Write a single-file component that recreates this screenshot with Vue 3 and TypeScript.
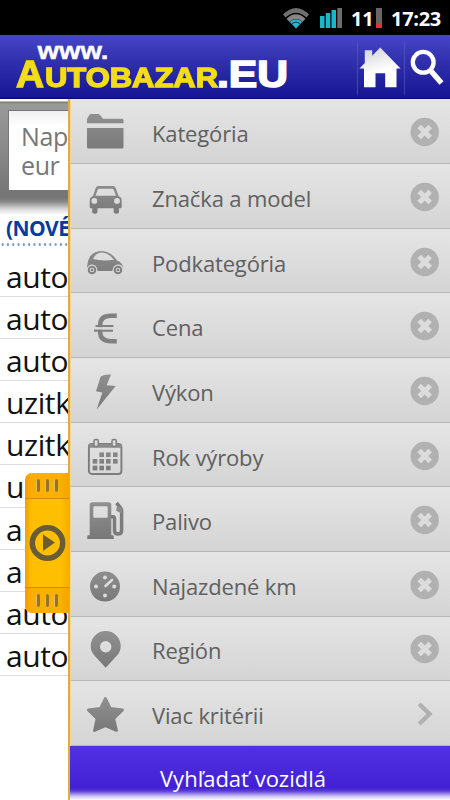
<script setup lang="ts">
interface Criterion {
  label: string
  icon: string
}

const criteria: Criterion[] = [
  { label: 'Kategória', icon: 'folder' },
  { label: 'Značka a model', icon: 'car' },
  { label: 'Podkategória', icon: 'compact' },
  { label: 'Cena', icon: 'euro' },
  { label: 'Výkon', icon: 'bolt' },
  { label: 'Rok výroby', icon: 'calendar' },
  { label: 'Palivo', icon: 'fuel' },
  { label: 'Najazdené km', icon: 'gauge' },
  { label: 'Región', icon: 'pin' },
  { label: 'Viac kritérii', icon: 'star' },
]

const categories: string[] = [
  'auto', 'auto', 'auto', 'uzitk', 'uzitk', 'u', 'a', 'a', 'auto', 'auto',
]

const days: number[][] = [
  [15.7, 18.7], [22.3, 18.7], [29.3, 18.7],
  [9, 25.3], [15.7, 25.3], [22.3, 25.3], [29.3, 25.3],
  [9, 32], [15.7, 32], [22.3, 32],
]
</script>

<template>
  <div class="screen">
    <div class="status">
      <svg class="wifi" width="28" height="24" viewBox="0 0 28 24">
        <path d="M1 8.500Q14-4.500 27 8.500L24.500 11.500Q14 2 3.500 11.500Z" fill="#6f6f6f" />
        <path d="M4.500 12.700Q14 4 23.500 12.700L20.500 16Q14 10 7.500 16Z" fill="#858585" />
        <path d="M7.800 16Q14 10.500 20.200 16L14 22.500Z" fill="#27b8cf" />
        <path d="M10 17.800Q14 14.500 18 17.800" fill="none" stroke="#0b4f5a" stroke-width="1.200" />
      </svg>
      <svg class="signal" width="24" height="22" viewBox="0 0 24 22">
        <path d="M1 9h4.500v12H1zM6.800 6h4.500v15H6.800zM12.500 3H17v18h-4.500z" fill="#1cb5c9" />
        <path d="M18.300 1H23v20h-4.700z" fill="#6d6d6d" />
      </svg>
      <span class="battery-text">11</span>
      <span class="battery"><i></i></span>
      <span class="clock">17:23</span>
    </div>

    <header class="header">
      <svg class="logo" width="357" height="64" viewBox="0 0 357 64">
        <text class="www" x="37.500" y="24" textLength="71" lengthAdjust="spacingAndGlyphs">www.</text>
        <text class="name big" x="16" y="51.500" textLength="28" lengthAdjust="spacingAndGlyphs">A</text>
        <text class="name small" x="45" y="51.500" textLength="173" lengthAdjust="spacingAndGlyphs">UTOBAZAR</text>
        <text class="tld" x="217" y="51.500" textLength="71" lengthAdjust="spacingAndGlyphs">.EU</text>
      </svg>
      <div class="action home">
        <svg width="46" height="64" viewBox="358.500 35 46 64">
          <defs>
            <linearGradient id="roof" x1="0" y1="0" x2="0.300" y2="1">
              <stop offset="0" stop-color="#cfcfd2" />
              <stop offset=".5" stop-color="#f2f2f3" />
              <stop offset=".7" stop-color="#fff" />
            </linearGradient>
          </defs>
          <path d="M380.700 47.500L401 68.500H397V87.300H385.700V73.300H376V87.300H364.500V68.500H360L365.300 63V50.300H372.700V55.800Z" fill="url(#roof)" />
        </svg>
      </div>
      <div class="action find">
        <svg width="45" height="64" viewBox="405 35 45 64">
          <circle cx="423.200" cy="62.300" r="10.400" fill="none" stroke="#fff" stroke-width="4.300" />
          <path d="M430.500 70.500L441.500 83" stroke="#fff" stroke-width="5.500" />
        </svg>
      </div>
    </header>

    <main class="body">
      <section class="page">
        <div class="searchbar"><div class="field">Nap<br />eur</div></div>
        <div class="news">(NOVÉ)</div>
        <ul class="list">
          <li v-for="(name, i) in categories" :key="i"><span>{{ name }}</span></li>
        </ul>
        <div class="handle">
          <div class="grip"><i></i><i></i><i></i></div>
          <div class="play">
            <svg width="38" height="38" viewBox="0 0 38 38">
              <circle cx="19.500" cy="19" r="15.200" fill="none" stroke="#685d36" stroke-width="5.500" />
              <path d="M15 10.500L27 18.500L15 27Z" fill="#685d36" />
            </svg>
          </div>
          <div class="grip"><i></i><i></i><i></i></div>
        </div>
      </section>

      <aside class="panel">
        <svg class="defs" width="0" height="0">
          <defs>
            <linearGradient id="ink" x1="0" y1="0" x2="0" y2="40" gradientUnits="userSpaceOnUse">
              <stop offset="0" stop-color="#929292" />
              <stop offset="1" stop-color="#777" />
            </linearGradient>
          </defs>
        </svg>
        <div v-for="item in criteria" :key="item.label" class="row">
          <svg class="icon" width="40" height="40" viewBox="0 0 40 40" fill="url(#ink)">
            <template v-if="item.icon === 'folder'">
              <path d="M1 11.300V7L3.500 2.800Q4 2 5 2H12Q13.200 2 14 3L17 6.800H36Q37.500 7 37.500 8.500V11.300Z" />
              <path d="M1 16H37.500V35Q37.500 36.500 36 36.500H2.500Q1 36.500 1 35Z" />
            </template>
            <path
              v-else-if="item.icon === 'car'"
              fill-rule="evenodd"
              d="M12.500 9H27Q29 9 29.700 11L32.500 19Q35.700 20 35.700 23.500V30Q35.700 31.300 34.300 31.300H33V34.500A2.600 2.200 0 0 1 27.700 34.500V31.300H11.500V34.500A2.600 2.200 0 0 1 6.200 34.500V31.300H5Q3.700 31.300 3.700 30V23.500Q3.700 20 7 19L9.700 11Q10.500 9 12.500 9ZM13 11.800Q12 11.800 11.700 12.800L9.500 18.800H30L27.700 12.800Q27.400 11.800 26.500 11.800ZM8.300 21A2.900 2.900 0 1 0 8.300 26.800A2.900 2.900 0 1 0 8.300 21ZM31 21A2.900 2.900 0 1 0 31 26.800A2.900 2.900 0 1 0 31 21Z"
            />
            <template v-else-if="item.icon === 'compact'">
              <path
                fill-rule="evenodd"
                d="M1.200 26Q.7 20 4 14.500Q8 9 16 9Q25 9.500 31 18.500Q37 20.500 37.300 27Q36.700 22.500 32 22.500Q27 22.500 26.400 29H11.600Q11 22.500 6 22.500Q2.500 22.500 1.200 26ZM7 17Q16 19.500 28 17.800Q23 11 16 10.600Q9.500 11 7 17Z"
              />
              <circle cx="6" cy="28" r="3.300" fill="#d9d9d9" stroke="#808080" stroke-width="2" />
              <circle cx="32" cy="28" r="3.300" fill="#d9d9d9" stroke="#808080" stroke-width="2" />
              <circle cx="6" cy="28" r="1.300" />
              <circle cx="32" cy="28" r="1.300" />
            </template>
            <g v-else-if="item.icon === 'euro'" fill="none" stroke="#818181">
              <path d="M30.800 9.800H25Q14.200 9.800 14.200 19V26Q14.200 35.200 25 35.200H30.800" stroke-width="4.500" />
              <path d="M9.500 20H27.500M8 24.700H27" stroke-width="2.200" />
              <path d="M11 22.350H27.500" stroke="#d9d9d9" stroke-width="2.300" />
            </g>
            <path v-else-if="item.icon === 'bolt'" d="M14.700 5.500Q19 3 25 3.500L20.700 14.200L29.700 15L10.700 38.500L16.300 21.500L10 20.200Z" />
            <template v-else-if="item.icon === 'calendar'">
              <rect x="2.900" y="8" width="32.500" height="30" rx="3" fill="none" stroke="#7c7c7c" stroke-width="1.900" />
              <path d="M2.500 8H35.500V11.800H2.500Z" />
              <rect x="8" y="3.400" width="4.300" height="7" rx="1.500" fill="#d9d9d9" stroke="#808080" stroke-width="1.500" />
              <rect x="26" y="3.400" width="4.300" height="7" rx="1.500" fill="#d9d9d9" stroke="#808080" stroke-width="1.500" />
              <rect v-for="(d, k) in days" :key="k" :x="d[0] - 2.300" :y="d[1] - 2.300" width="4.600" height="4.600" />
            </template>
            <template v-else-if="item.icon === 'fuel'">
              <path
                fill-rule="evenodd"
                d="M6.500 2.300H22.500Q25.300 2.300 25.300 5V35.300H27Q27.700 35.300 27.700 36V39H1.300V36Q1.300 35.300 2 35.300H3.700V5Q3.700 2.300 6.500 2.300ZM8.500 6.300Q7.300 6.300 7.300 7.500V16.500Q7.300 17.700 8.500 17.700H20.500Q21.700 17.700 21.700 16.500V7.500Q21.700 6.300 20.500 6.300Z"
              />
              <path d="M25 16.800H27Q28.500 16.800 28.500 19V30.500Q28.500 34 32 34Q35.600 34 35.600 30.500V11Q35.600 9 34 7L30.500 3" fill="none" stroke="#7b7b7b" stroke-width="3.500" />
              <path d="M31 6L30 10.500L36 14V8Z" />
            </template>
            <template v-else-if="item.icon === 'gauge'">
              <circle cx="19" cy="21.600" r="15" />
              <g fill="#dcdcdc">
                <circle cx="19" cy="12.600" r="2" />
                <circle cx="10" cy="21.600" r="2" />
                <circle cx="28.200" cy="21.600" r="2" />
                <circle cx="19" cy="30.600" r="2" />
              </g>
              <path d="M19.500 21L26 15" stroke="#dcdcdc" stroke-width="2.600" stroke-linecap="round" />
            </template>
            <path
              v-else-if="item.icon === 'pin'"
              fill-rule="evenodd"
              d="M19.700 2A15 15 0 0 1 34.700 17Q34.700 22.500 31 26.500L19.700 38.700L8.400 26.500Q4.700 22.500 4.700 17A15 15 0 0 1 19.700 2ZM19.700 12A5.700 5.700 0 1 0 19.700 23.400A5.700 5.700 0 1 0 19.700 12Z"
            />
            <path
              v-else
              d="M19.400 4.500L24.300 14.300L36.500 16L27.800 24.500L30.500 36.500L19.400 31.800L8.500 36.500L11 24.500L2.300 16L14.500 14.300Z"
              stroke="url(#ink)"
              stroke-width="2.800"
              stroke-linejoin="round"
            />
          </svg>
          <span class="label">{{ item.label }}</span>
          <svg class="end" width="30" height="30" viewBox="0 0 30 30">
            <path v-if="item.icon === 'star'" d="M9.200 5L19.500 15L9.200 25" fill="none" stroke="#b1b1b1" stroke-width="4.400" />
            <template v-else>
              <circle cx="14.700" cy="15" r="14.200" fill="#b1b1b1" />
              <path d="M9.200 9.500L20.200 20.500M20.200 9.500L9.200 20.500" stroke="#dcdcdc" stroke-width="5" />
            </template>
          </svg>
        </div>
        <button class="submit">Vyhľadať vozidlá</button>
      </aside>
    </main>
  </div>
</template>

<style>
body {
  margin: 0;
  overflow: hidden;
}
</style>

<style scoped>
.screen {
  width: 450px;
  height: 800px;
  display: flex;
  flex-direction: column;
  overflow: hidden;
  background: #fff;
  font-family: "Open Sans", "Noto Sans", sans-serif;
}
.status {
  height: 35px;
  flex: none;
  box-sizing: border-box;
  display: flex;
  align-items: center;
  justify-content: flex-end;
  padding: 1px 9px 0 0;
  background: #000;
  color: #fff;
  font-size: 20px;
  letter-spacing: -.3px;
  font-weight: 700;
}
.signal {
  margin-left: 9px;
}
.battery-text {
  margin-left: 8px;
  width: 23px;
}
.battery {
  display: flex;
  align-items: flex-end;
  width: 6px;
  height: 20px;
  margin: 0 9px 0 2px;
  background: #676767;
}
.battery i {
  width: 6px;
  height: 5px;
  background: #d63b32;
}
.clock {
  width: 50px;
  white-space: nowrap;
}
.header {
  height: 64px;
  flex: none;
  display: flex;
  background: linear-gradient(#4646c8, #3131ae 40%, #171795 96%, #080878);
}
.action {
  box-sizing: border-box;
  height: 64px;
  border-left: 1px solid;
  border-image: linear-gradient(transparent 8%, #5252bd 15%, #4040ad 90%, transparent 95%) 1;
}
.home {
  width: 47px;
}
.find {
  width: 46px;
}
.logo text {
  font-family: "Liberation Sans", Arial, sans-serif;
  font-weight: 700;
  paint-order: stroke;
}
.www,
.tld {
  fill: #fff;
  stroke: #fff;
}
.www {
  font-size: 23px;
  stroke-width: .4px;
}
.tld {
  font-size: 37px;
  stroke-width: 1.600px;
}
.name {
  fill: #f3dc18;
  stroke: #f3dc18;
  stroke-width: 1.300px;
  filter: drop-shadow(0 0 .5px #56503f);
}
.big {
  font-size: 37px;
}
.small {
  font-size: 27.500px;
}
.body {
  flex: 1;
  display: flex;
  min-height: 0;
}
.page {
  position: relative;
  width: 68px;
  flex: none;
}
.searchbar {
  box-sizing: border-box;
  height: 116px;
  padding: 11px 0 0 8px;
  overflow: hidden;
  background: linear-gradient(#fff 0, #fff 2px, #777 3px, #999 5px, #8b8b8b 45px, #747474 98px, #8a8a8a 103px, #d8d8d8 110px, #fff 116px);
}
.field {
  box-sizing: border-box;
  width: 200px;
  height: 81px;
  padding: 11px 12px;
  border: 1px solid #777;
  background: linear-gradient(#f0f0f0, #fff 20%);
  color: #777;
  font-size: 25px;
  letter-spacing: -.4px;
  line-height: 29px;
}
.news {
  box-sizing: border-box;
  height: 31px;
  padding-left: 6px;
  overflow: hidden;
  color: #073c9c;
  font-size: 21px;
  letter-spacing: -.6px;
  font-weight: 700;
  line-height: 27px;
  background: radial-gradient(circle, #6f93bd 1px, transparent 1.400px) 0 28px / 5.300px 3px repeat-x;
}
.list {
  list-style: none;
  margin: 0;
  padding: 9px 0 0;
}
.list li {
  box-sizing: border-box;
  height: 42.100px;
  border-bottom: 1px solid #dcdcdc;
  padding-left: 6px;
  overflow: hidden;
  color: #111;
  font-size: 30px;
  letter-spacing: -.4px;
  line-height: 43px;
}
.handle {
  position: absolute;
  left: 25px;
  top: 374px;
  width: 44px;
  height: 140px;
  display: flex;
  flex-direction: column;
  border-radius: 7px 0 0 7px;
  overflow: hidden;
  background: linear-gradient(90deg, #f59e00, #ffbe00 15%, #ffc000 80%, #f9ac00);
}
.grip {
  height: 25px;
  display: flex;
  align-items: center;
  justify-content: center;
  gap: 5px;
  background: rgba(240, 150, 0, .35);
}
.grip i {
  width: 3px;
  height: 13px;
  border-radius: 2px;
  border-left: 1px solid #e1bd65;
  background: #947427;
}
.play {
  flex: 1;
  display: flex;
  align-items: center;
  justify-content: center;
  border: 1px solid #cf8b08;
  border-width: 1px 0;
}
.panel {
  flex: 1;
  display: flex;
  flex-direction: column;
  border-left: 2px solid #e0ac3f;
  box-shadow: inset 1px 0 #f4d692;
  min-width: 0;
}
.defs {
  position: absolute;
}
.row {
  box-sizing: border-box;
  height: 64.650px;
  flex: none;
  display: flex;
  align-items: center;
  margin-left: 1px;
  padding: 2px 10px 0 15px;
  background: linear-gradient(#e5e5e5, #d4d4d4);
  border-bottom: 1px solid #b6b6b6;
}
.row:first-of-type {
  height: 65.200px;
}
.label {
  flex: 1;
  margin: 2px 0 0 26px;
  color: #606060;
  font-size: 22px;
  letter-spacing: -.15px;
  white-space: nowrap;
}
.submit {
  flex: 1;
  margin: 0;
  padding: 11px 34px 0 0;
  border: 0;
  background: linear-gradient(#5231e3, #4220d4 42px, #5b3ddb 45px, #c9bff3 50px, #fff 54px);
  color: #fff;
  font: 22px "Open Sans", "Noto Sans", sans-serif;
  text-align: center;
  white-space: nowrap;
}
</style>
